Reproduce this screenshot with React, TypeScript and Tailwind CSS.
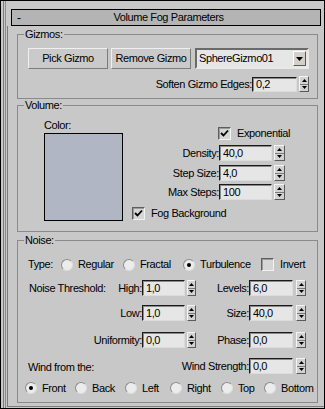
import React from "react";

function Field({ value, w, h = "h-[16px]" }: { value: string; w: string; h?: string }) {
  return (
    <div
      className={`${w} ${h} flex items-center pl-[3px] bg-[#e6e6e6] border border-t-[#1a1a1a] border-l-[#1a1a1a] border-b-[#dcdcdc] border-r-[#dcdcdc] shadow-[inset_1px_1px_0_#8a8a8a]`}
    >
      {value}
    </div>
  );
}

function Spinner({ w = "w-[10px]", className = "" }: { w?: string; className?: string }) {
  return (
    <div
      className={`${w} h-[16px] flex flex-col bg-[#d2d2d2] border border-t-[#f4f4f4] border-l-[#f4f4f4] border-b-[#5a5a5a] border-r-[#5a5a5a] ${className}`}
    >
      <div className="flex-1 flex items-center justify-center border-b border-[#7a7a7a]">
        <svg width="5" height="3" viewBox="0 0 5 3">
          <path d="M2.5 0 L5 3 L0 3 Z" fill="#000" />
        </svg>
      </div>
      <div className="flex-1 flex items-center justify-center">
        <svg width="5" height="3" viewBox="0 0 5 3">
          <path d="M0 0 L5 0 L2.5 3 Z" fill="#000" />
        </svg>
      </div>
    </div>
  );
}

function Checkbox({ checked }: { checked?: boolean }) {
  return (
    <div className="w-[13px] h-[13px] flex items-center justify-center bg-[#d6d6d6] border border-t-[#5e5e5e] border-l-[#5e5e5e] border-b-[#f2f2f2] border-r-[#f2f2f2] shadow-[inset_1px_1px_0_#9a9a9a]">
      {checked && (
        <svg width="9" height="9" viewBox="0 0 9 9">
          <path d="M1 4 L3.5 6.5 L8 1.5" stroke="#000" strokeWidth="1.8" fill="none" />
        </svg>
      )}
    </div>
  );
}

function Radio({ checked }: { checked?: boolean }) {
  return (
    <div className="w-[12px] h-[12px] rounded-full flex items-center justify-center bg-[#ececec] border border-t-[#8c8c8c] border-l-[#8c8c8c] border-b-[#dedede] border-r-[#dedede]">
      {checked && <div className="w-[4px] h-[4px] rounded-full bg-black" />}
    </div>
  );
}

function Button({ label }: { label: string }) {
  return (
    <div className="w-[80px] h-[21px] flex items-center justify-center bg-[#cacaca] border border-t-[#f0f0f0] border-l-[#f0f0f0] border-b-[#7c7c7c] border-r-[#7c7c7c]">
      {label}
    </div>
  );
}

function Group({ label, className, children }: { label: string; className: string; children: React.ReactNode }) {
  return (
    <div className={`relative border border-[#8a8a8a] ${className}`}>
      <span className="absolute left-[6px] top-[-7px] px-[1px] bg-[#c8c8c8]">{label}</span>
      {children}
    </div>
  );
}

function SpinRow({ label, value }: { label: string; value: string }) {
  return (
    <div className="flex items-center h-[16px]">
      <span className="w-[87px] text-right">{label}</span>
      <Field value={value} w="w-[53px]" />
      <Spinner w="w-[11px]" className="ml-[2px]" />
    </div>
  );
}

function NoiseRow({ left, high, lowVal, right, rightVal }: { left?: string; high: string; lowVal: string; right: string; rightVal: string }) {
  return (
    <div className="flex items-center h-[16px]">
      <div className="w-[124px] flex justify-between">
        <span className="pl-[11px]">{left}</span>
        <span>{high}</span>
      </div>
      <Field value={lowVal} w="w-[43px]" />
      <Spinner w="w-[9px]" className="ml-[2px]" />
      <span className="w-[53px] text-right">{right}</span>
      <Field value={rightVal} w="w-[44px]" />
      <Spinner className="ml-[3px]" />
    </div>
  );
}

function Option({ label, checked, w }: { label: string; checked?: boolean; w: string }) {
  return (
    <div className={`${w} flex items-center gap-[5px]`}>
      <Radio checked={checked} />
      <span>{label}</span>
    </div>
  );
}

export default function App() {
  return (
    <div className="w-[325px] h-[409px] border border-black bg-[#c8c8c8] flex overflow-hidden font-['Liberation_Sans',Arial,sans-serif] text-[11px] leading-[13px] tracking-[-0.4px] text-black">
      <div className="w-[2px]" />
      <div className="w-[2px] border-l border-[#7c7c7c]" />
      <div className="w-[2px] border-l border-[#8c8c8c]" />
      <div className="flex-1 flex flex-col pt-[8px]">
        {/* Rollout title */}
        <div className="ml-[4px] w-[310px] h-[17px] flex items-center border border-black bg-[#b4b4b4]">
          <span className="w-[0px] pl-[5px] pt-[1px] text-[12px]">-</span>
          <span className="flex-1 text-center">Volume Fog Parameters</span>
        </div>
        {/* Rollout frame */}
        <div className="flex-1 mb-[1px] border-l border-b border-[#7c7c7c] flex flex-col">
          <Group label="Gizmos:" className="ml-[9px] mt-[8px] w-[301px] h-[65px]">
            <div className="flex mt-[13px] ml-[10px] gap-[3px]">
              <Button label="Pick Gizmo" />
              <Button label="Remove Gizmo" />
              <div className="ml-[1px] w-[114px] h-[21px] flex items-center justify-between bg-[#e6e6e6] border-2 border-t-[#6a6a6a] border-l-[#6a6a6a] border-b-[#e8e8e8] border-r-[#e8e8e8]">
                <span className="pl-[2px]">SphereGizmo01</span>
                <div className="w-[13px] h-[15px] mr-[1px] flex items-center justify-center bg-[#d4d0c8] border border-t-[#ffffff] border-l-[#ffffff] border-b-[#5a5a5a] border-r-[#5a5a5a]">
                  <svg width="7" height="4" viewBox="0 0 7 4">
                    <path d="M0 0 L7 0 L3.5 4 Z" fill="#000" />
                  </svg>
                </div>
              </div>
            </div>
            <div className="flex items-center mt-[7px]">
              <span className="w-[234px] text-right">Soften Gizmo Edges:</span>
              <Field value="0,2" w="w-[45px]" h="h-[15px]" />
              <Spinner className="ml-[2px]" />
            </div>
          </Group>

          <Group label="Volume:" className="ml-[9px] mt-[6px] w-[301px] h-[127px]">
            <div className="flex">
              <div className="ml-[26px] mt-[13px] flex flex-col">
                <span>Color:</span>
                <div className="mt-[1px] w-[79px] h-[88px] border border-black bg-[#b0b6c3]" />
              </div>
              <div className="ml-[9px] mt-[21px] flex flex-col">
                <div className="flex items-center h-[13px] pl-[86px] gap-[6px]">
                  <Checkbox checked />
                  <span>Exponential</span>
                </div>
                <div className="mt-[5px]">
                  <SpinRow label="Density:" value="40,0" />
                </div>
                <div className="mt-[4px]">
                  <SpinRow label="Step Size:" value="4,0" />
                </div>
                <div className="mt-[3px]">
                  <SpinRow label="Max Steps:" value="100" />
                </div>
                <div className="mt-[7px] flex items-center h-[13px] gap-[6px]">
                  <Checkbox checked />
                  <span>Fog Background</span>
                </div>
              </div>
            </div>
          </Group>

          <Group label="Noise:" className="ml-[9px] mt-[8px] w-[301px] h-[163px]">
            <div className="flex items-center h-[13px] mt-[17px]">
              <span className="w-[43px] pl-[10px]">Type:</span>
              <Option w="w-[62px]" label="Regular" />
              <Option w="w-[60px]" label="Fractal" />
              <Option w="w-[78px]" label="Turbulence" checked />
              <div className="flex items-center gap-[6px]">
                <Checkbox />
                <span>Invert</span>
              </div>
            </div>
            <div className="mt-[9px]">
              <NoiseRow left="Noise Threshold:" high="High:" lowVal="1,0" right="Levels:" rightVal="6,0" />
            </div>
            <div className="mt-[9px]">
              <NoiseRow high="Low:" lowVal="1,0" right="Size:" rightVal="40,0" />
            </div>
            <div className="mt-[11px]">
              <NoiseRow high="Uniformity:" lowVal="0,0" right="Phase:" rightVal="0,0" />
            </div>
            <div className="mt-[10px] flex h-[16px]">
              <div className="w-[231px] flex justify-between">
                <span className="pl-[10px] self-end">Wind from the:</span>
                <span className="self-center">Wind Strength:</span>
              </div>
              <Field value="0,0" w="w-[44px]" />
              <Spinner className="ml-[3px]" />
            </div>
            <div className="mt-[8px] ml-[7px] flex items-center h-[12px]">
              <Option w="w-[50px]" label="Front" checked />
              <Option w="w-[50px]" label="Back" />
              <Option w="w-[45px]" label="Left" />
              <Option w="w-[51px]" label="Right" />
              <Option w="w-[43px]" label="Top" />
              <Option w="w-[50px]" label="Bottom" />
            </div>
          </Group>
        </div>
      </div>
    </div>
  );
}
